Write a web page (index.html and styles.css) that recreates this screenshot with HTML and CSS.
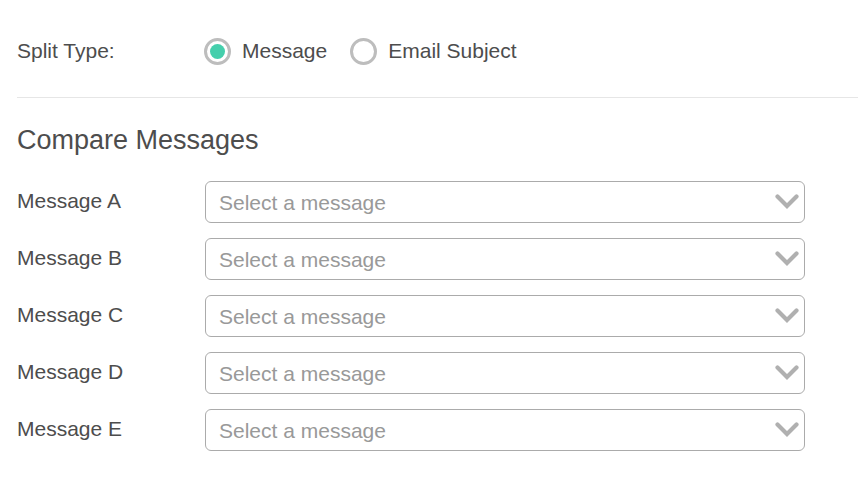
FILE: index.html
```html
<!DOCTYPE html>
<html>
<head>
<meta charset="utf-8">
<link rel="stylesheet" href="styles.css">
</head>
<body>
<div class="page">
  <div class="split-row">
    <div class="label">Split Type:</div>
    <div class="radios">
      <label class="radio">
        <span class="dot checked"></span>
        <span class="radio-text">Message</span>
      </label>
      <label class="radio">
        <span class="dot"></span>
        <span class="radio-text">Email Subject</span>
      </label>
    </div>
  </div>
  <hr class="divider">
  <h2 class="heading">Compare Messages</h2>
  <div class="rows">
    <div class="row"><div class="label">Message A</div><div class="select"><span class="placeholder">Select a message</span><svg class="chev" viewBox="0 0 24 16" width="24" height="16"><path d="M2.5 2.5 L12 12 L21.5 2.5" fill="none" stroke="#b0b0b0" stroke-width="4.2" stroke-linecap="round" stroke-linejoin="miter"/></svg></div></div>
    <div class="row"><div class="label">Message B</div><div class="select"><span class="placeholder">Select a message</span><svg class="chev" viewBox="0 0 24 16" width="24" height="16"><path d="M2.5 2.5 L12 12 L21.5 2.5" fill="none" stroke="#b0b0b0" stroke-width="4.2" stroke-linecap="round" stroke-linejoin="miter"/></svg></div></div>
    <div class="row"><div class="label">Message C</div><div class="select"><span class="placeholder">Select a message</span><svg class="chev" viewBox="0 0 24 16" width="24" height="16"><path d="M2.5 2.5 L12 12 L21.5 2.5" fill="none" stroke="#b0b0b0" stroke-width="4.2" stroke-linecap="round" stroke-linejoin="miter"/></svg></div></div>
    <div class="row"><div class="label">Message D</div><div class="select"><span class="placeholder">Select a message</span><svg class="chev" viewBox="0 0 24 16" width="24" height="16"><path d="M2.5 2.5 L12 12 L21.5 2.5" fill="none" stroke="#b0b0b0" stroke-width="4.2" stroke-linecap="round" stroke-linejoin="miter"/></svg></div></div>
    <div class="row"><div class="label">Message E</div><div class="select"><span class="placeholder">Select a message</span><svg class="chev" viewBox="0 0 24 16" width="24" height="16"><path d="M2.5 2.5 L12 12 L21.5 2.5" fill="none" stroke="#b0b0b0" stroke-width="4.2" stroke-linecap="round" stroke-linejoin="miter"/></svg></div></div>
  </div>
</div>
</body>
</html>
```

FILE: styles.css
```css
html, body {
  margin: 0;
  padding: 0;
  background: #ffffff;
}
body {
  font-family: "Liberation Sans", Arial, sans-serif;
  color: #555555;
  font-size: 21px;
}
.page {
  padding: 30px 0 0 17px;
}
.split-row {
  display: flex;
  align-items: center;
  height: 42px;
}
.label {
  width: 188px;
  flex: 0 0 188px;
  color: #4d4d4d;
}
.row .label {
  padding-bottom: 2px;
}
.split-row .label {
  width: 187px;
  flex-basis: 187px;
}
.radios {
  display: flex;
  align-items: center;
  gap: 23px;
}
.radio {
  display: flex;
  align-items: center;
  gap: 11px;
}
.dot {
  width: 27px;
  height: 27px;
  box-sizing: border-box;
  border: 3px solid #bdbdbd;
  border-radius: 50%;
  display: flex;
  align-items: center;
  justify-content: center;
}
.dot.checked::after {
  content: "";
  width: 15px;
  height: 15px;
  border-radius: 50%;
  background: #45cfac;
}
.radio-text {
  color: #4d4d4d;
}
.divider {
  margin: 25px 0 0 0;
  border: 0;
  border-top: 1px solid #e6e6e6;
  height: 0;
}
.heading {
  margin: 26px 0 0 0;
  font-size: 27px;
  line-height: 32px;
  font-weight: normal;
  color: #4d4d4d;
}
.rows {
  margin-top: 25px;
  display: flex;
  flex-direction: column;
  gap: 15px;
}
.row {
  display: flex;
  align-items: center;
  height: 42px;
}
.select {
  width: 600px;
  height: 42px;
  box-sizing: border-box;
  border: 1px solid #ababab;
  border-radius: 6px;
  display: flex;
  align-items: center;
  justify-content: space-between;
  padding: 1px 5px 0 13px;
}
.placeholder {
  color: #999999;
}
.chev {
  display: block;
  margin-bottom: 1px;
}
```
